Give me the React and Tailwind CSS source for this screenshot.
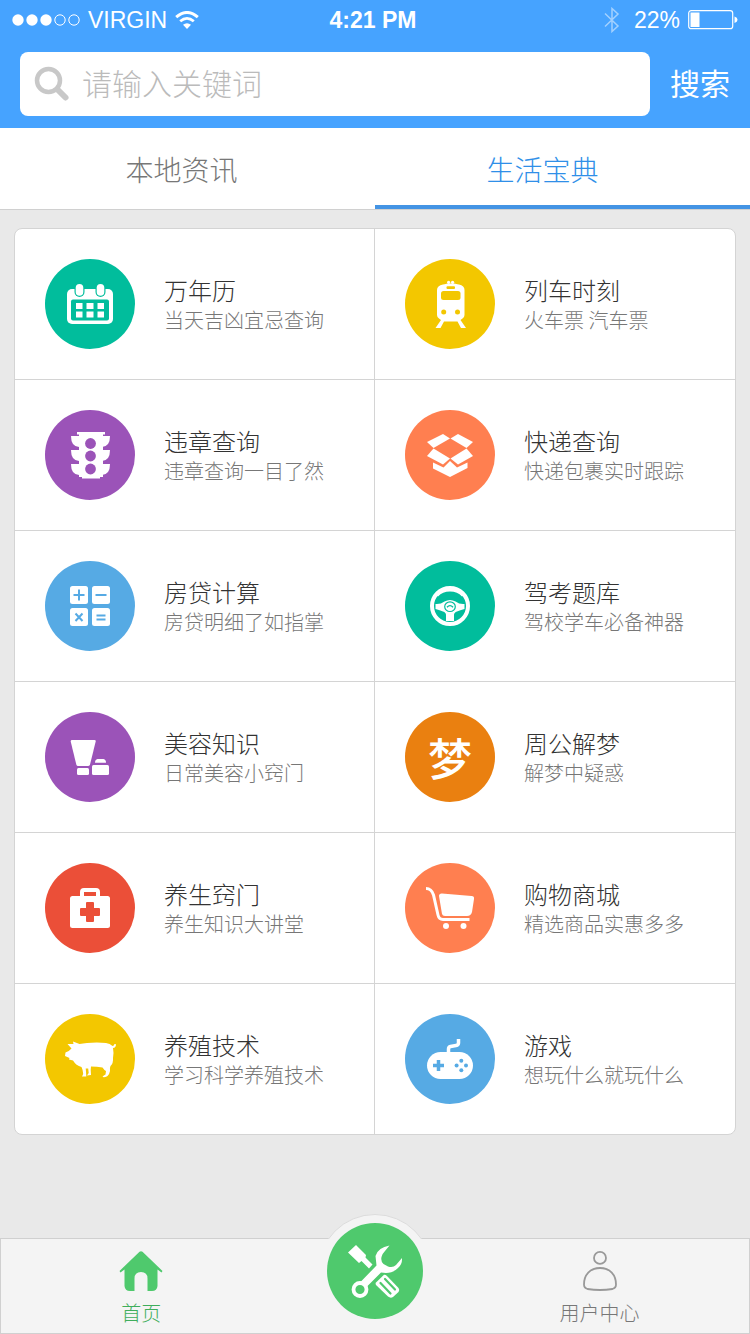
// App.jsx

import React from 'react';

// Service icons, all drawn on the 90x90 badge
const CalendarIcon = ({ color }) => (
  <g fill="#fff">
    <rect x="22" y="30" width="46" height="35" rx="5" />
    <rect x="26" y="40.5" width="38" height="21" rx="2" fill={color} />
    <rect x="29.5" y="22" width="10" height="16" rx="5" fill={color} />
    <rect x="50.5" y="22" width="10" height="16" rx="5" fill={color} />
    <rect x="30.7" y="25" width="7.6" height="11.8" rx="3.8" />
    <rect x="51.7" y="25" width="7.6" height="11.8" rx="3.8" />
    {[44, 52.5].map((y) => (
      <g key={y}>
        <rect x="31" y={y} width="6.5" height="6" />
        <rect x="41.5" y={y} width="7" height="6" />
        <rect x="52.5" y={y} width="6.5" height="6" />
      </g>
    ))}
  </g>
);

const TrainIcon = ({ color }) => (
  <g fill="#fff">
    <circle cx="43.6" cy="23.3" r="1.6" />
    <circle cx="47.6" cy="23.3" r="1.6" />
    <path d="M38 25.5 C42 24 50 24 54 25.5 Q59.5 26.5 59.5 31 V56 Q59.5 58 57.5 59.5 L55.5 61 L61 69 H56 L52.5 62.5 H39 L35.5 69 H30.5 L36 61 L34 59.5 Q32 58 32 56 V31 Q32 26.5 38 25.5 Z" />
    <rect x="41.5" y="27.3" width="8.5" height="2.7" rx="1" fill={color} />
    <rect x="36" y="32" width="19.5" height="9" rx="2.5" fill={color} />
    <circle cx="38.7" cy="53" r="2.5" fill={color} />
    <circle cx="52.5" cy="53" r="2.5" fill={color} />
  </g>
);

const TrafficIcon = ({ color }) => (
  <g fill="#fff">
    <path d="M32 22 H60 V24.5 H58 V67 H55 V68.5 H37 V67 H34 V24.5 H32 Z" />
    {[26, 40, 54].map((y) => (
      <path
        key={y}
        d={`M26 ${y} H65 Q65 ${y + 10.5} 57 ${y + 11} H34 Q26 ${y + 10.5} 26 ${y} Z`}
      />
    ))}
    <circle cx="45.5" cy="33.5" r="5.4" fill={color} />
    <circle cx="45.5" cy="46" r="5.4" fill={color} />
    <circle cx="45.5" cy="59" r="5.4" fill={color} />
  </g>
);

const BoxIcon = () => (
  <g fill="#fff">
    <path d="M22 32 L38 24 L45 28.5 L28.5 38 Z" />
    <path d="M68 32 L53 24 L45.5 28.5 L61.5 38 Z" />
    <path d="M28.5 38.5 L45 48.5 L38 54.5 L22 46 Z" />
    <path d="M61.5 38.5 L45.5 48.5 L53 54.5 L68 46 Z" />
    <path d="M28 52.5 L38.5 57.5 L45 51 L52 57.5 L62.5 52.5 V58 L45 67 L28 58.5 Z" />
  </g>
);

const CalcIcon = ({ color }) => (
  <g>
    <g fill="#fff">
      <rect x="25" y="25" width="18" height="18" rx="2.5" />
      <rect x="47" y="25" width="18" height="18" rx="2.5" />
      <rect x="25" y="47" width="18" height="18" rx="2.5" />
      <rect x="47" y="47" width="18" height="18" rx="2.5" />
    </g>
    <path
      d="M28.5 34 H39.5 M34 28.5 V39.5 M50.5 34 H61.5 M30.5 52.5 L37.5 60 M37.5 52.5 L30.5 60 M51.5 54.5 H60.5 M51.5 58.5 H60.5"
      stroke={color}
      strokeWidth="2"
      fill="none"
    />
  </g>
);

const WheelIcon = ({ color }) => (
  <g fill="#fff">
    <circle cx="45" cy="45" r="18" fill="none" stroke="#fff" strokeWidth="4" />
    <path d="M30 33 Q35.5 26 45 26 Q54.5 26 60 33 L57 35.5 Q52.5 30.5 45 30.5 Q37.5 30.5 33 35.5 Z" />
    <path d="M30.5 43 Q35.5 43.5 39.5 40.5 Q45 37.5 50.5 40.5 Q54.5 43.5 59.5 43 V48 Q55 49 52 50.5 Q49 51.5 49 54 V60 H41 V54 Q41 51.5 38 50.5 Q35 49 30.5 48 Z" />
    <ellipse cx="45" cy="45.7" rx="5.3" ry="4.8" fill="none" stroke={color} strokeWidth="1.2" />
    <path d="M42 46.3 Q45 43 48 46.3" fill="none" stroke={color} strokeWidth="1.4" />
  </g>
);

const BeautyIcon = () => (
  <g fill="#fff">
    <path d="M27 28 H49.5 Q51 28 50.7 29.5 L45 52.5 Q44.5 54 43 54 H33 Q31.7 54 31.3 52.5 L25.7 29.5 Q25.5 28 27 28 Z" />
    <rect x="32" y="56" width="12" height="7" rx="1.5" />
    <path d="M52.5 47 H58.5 Q61 47.5 61 50.8 H50 Q50 47.5 52.5 47 Z" />
    <rect x="47" y="53" width="17" height="10" rx="1.5" />
  </g>
);

const MedkitIcon = ({ color }) => (
  <g fill="#fff">
    <rect x="25" y="33" width="40" height="32" rx="2.5" />
    <path d="M37 34 V29 Q37 27 39 27 H51 Q53 27 53 29 V34" fill="none" stroke="#fff" strokeWidth="4" />
    <path
      d="M42 39 H48 Q49 39 49 40 V45 H54 Q55 45 55 46 V52 Q55 53 54 53 H49 V58 Q49 59 48 59 H42 Q41 59 41 58 V53 H36 Q35 53 35 52 V46 Q35 45 36 45 H41 V40 Q41 39 42 39 Z"
      fill={color}
    />
  </g>
);

const CartIcon = () => (
  <g fill="#fff">
    <path d="M21 25.5 Q26.5 25.5 28.5 32 L33 52 Q34 56.5 38 56.5 H64.5" fill="none" stroke="#fff" strokeWidth="3" />
    <path d="M37 30.5 L66.5 33 Q69.5 33.2 69 36 L67 49 Q66 53 62 53 H40 Q37.5 53 37 51 L34 33 Q34 30.3 37 30.5 Z" />
    <circle cx="41" cy="63" r="3" />
    <circle cx="58.5" cy="63" r="3" />
  </g>
);

const PigIcon = () => (
  <g fill="#fff">
    <path d="M22.5 30 L28.5 30 L28 27.5 L34.5 30 Q38 29.5 42 29 Q52 28 61 29 Q65 29.5 67.5 32 Q69 32 69.5 30 L71 30.3 Q71 34 68 34 Q69 39 68 44 Q68.5 49 65.5 52 Q64.5 54 65 57 Q64.5 60 62.5 62 Q61 63.5 57.5 63 Q58 61.5 60.5 60.5 L61 57 Q59 56 57.5 53.5 Q52 52.5 46 52.5 L45.7 56 L46 61 L42 61.5 L43.7 59 L43.2 54.5 L40.7 54.5 Q41 57 41.3 62.5 L37 62.5 L38.2 60 Q38 56 36.5 53 Q31 51.5 28 46.5 L24 45.5 L24.5 44 L20 42 L20.5 38.5 Q24 37.5 26.5 34.5 Z" />
  </g>
);

const GameIcon = ({ color }) => (
  <g>
    <rect x="22" y="38" width="46" height="27" rx="13.5" fill="#fff" />
    <path d="M43.5 38.5 V35 Q43.5 33 45.5 32.5 L51 31.5 Q53.5 31 53.5 29 V25" fill="none" stroke="#fff" strokeWidth="3.5" />
    <path d="M28 51.5 H39 M33.5 46 V57" stroke={color} strokeWidth="3.5" />
    <g fill={color}>
      <circle cx="56.3" cy="46.7" r="2" />
      <circle cx="61" cy="51.5" r="2" />
      <circle cx="56.3" cy="56.3" r="2" />
      <circle cx="51.6" cy="51.5" r="2" />
    </g>
  </g>
);

const services = [
  { title: '万年历', desc: '当天吉凶宜忌查询', color: '#01bd9c', icon: CalendarIcon },
  { title: '列车时刻', desc: '火车票 汽车票', color: '#f3c700', icon: TrainIcon },
  { title: '违章查询', desc: '违章查询一目了然', color: '#9b53b8', icon: TrafficIcon },
  { title: '快递查询', desc: '快递包裹实时跟踪', color: '#ff7f50', icon: BoxIcon },
  { title: '房贷计算', desc: '房贷明细了如指掌', color: '#56aae4', icon: CalcIcon },
  { title: '驾考题库', desc: '驾校学车必备神器', color: '#01bd9c', icon: WheelIcon },
  { title: '美容知识', desc: '日常美容小窍门', color: '#9b53b8', icon: BeautyIcon },
  { title: '周公解梦', desc: '解梦中疑惑', color: '#ea8010', glyph: '梦' },
  { title: '养生窍门', desc: '养生知识大讲堂', color: '#eb4f38', icon: MedkitIcon },
  { title: '购物商城', desc: '精选商品实惠多多', color: '#ff7f50', icon: CartIcon },
  { title: '养殖技术', desc: '学习科学养殖技术', color: '#f3c700', icon: PigIcon },
  { title: '游戏', desc: '想玩什么就玩什么', color: '#56aae4', icon: GameIcon },
];

// Round colored badge
const Badge = ({ color, icon: Icon, glyph }) => (
  <span
    className="flex size-[90px] shrink-0 items-center justify-center rounded-full text-[44px] leading-none font-medium text-white"
    style={{ backgroundColor: color }}
  >
    {Icon ? (
      <svg viewBox="0 0 90 90" className="size-full" aria-hidden="true">
        <Icon color={color} />
      </svg>
    ) : (
      glyph
    )}
  </span>
);

const ServiceCell = ({ title, desc, color, icon, glyph }) => (
  <li className="border-b border-[#d4d4d4] odd:border-r nth-last-[-n+2]:border-b-0">
    <a href="#" className="flex h-[150px] items-center gap-[29px] pl-[30px]">
      <Badge color={color} icon={icon} glyph={glyph} />
      <span className="flex flex-col pt-0.5">
        <span className="text-[24px] leading-[30px] text-[#333]">{title}</span>
        <span className="text-[20px] leading-[30px] text-[#777]">{desc}</span>
      </span>
    </a>
  </li>
);

const StatusBar = () => (
  <div className="grid h-10 grid-cols-[1fr_auto_1fr] items-center px-3 font-['Liberation_Sans',sans-serif] text-[23px] leading-none font-normal text-white">
    <div className="flex items-center gap-2">
      <svg width="68" height="12" viewBox="0 0 68 12" aria-hidden="true">
        {[6, 20, 34].map((x) => (
          <circle key={x} cx={x} cy="6" r="5.7" fill="#fff" />
        ))}
        {[48, 62].map((x) => (
          <circle key={x} cx={x} cy="6" r="5.2" fill="none" stroke="#fff" />
        ))}
      </svg>
      <span>VIRGIN</span>
      <svg width="24" height="18" viewBox="0 0 24 18" fill="none" stroke="#fff" aria-hidden="true">
        <path d="M1.2 6.2 Q12 -3.2 22.8 6.2" strokeWidth="3" />
        <path d="M5.2 10.3 Q12 4.5 18.8 10.3" strokeWidth="2.8" />
        <path d="M8 13.8 Q12 10.5 16 13.8 L12 18 Z" fill="#fff" stroke="none" />
      </svg>
    </div>
    <span className="pr-1 font-bold">4:21 PM</span>
    <div className="flex items-center justify-end gap-2">
      <svg width="16" height="26" viewBox="0 0 16 26" fill="none" stroke="#fff" strokeWidth="1.5" className="opacity-50" aria-hidden="true">
        <path d="M1 6.5 L14 19 L8 24.5 V1.5 L14 7 L1 19.5" />
      </svg>
      <span className="pl-1.5">22%</span>
      <svg width="50" height="20" viewBox="0 0 50 20" aria-hidden="true">
        <rect x="0.7" y="0.7" width="44" height="18" rx="2.5" fill="none" stroke="#fff" strokeWidth="1.2" />
        <rect x="2.5" y="2.5" width="9" height="14.5" fill="#fff" />
        <path d="M46.5 6.5 Q49.5 7.5 49.5 9.7 Q49.5 12 46.5 13 Z" fill="#fff" />
      </svg>
    </div>
  </div>
);

const SearchBar = () => (
  <form className="flex items-center px-5 py-3" onSubmit={(e) => e.preventDefault()}>
    <label className="flex h-16 flex-1 items-center gap-3 rounded-lg bg-white pl-[14px]">
      <svg width="36" height="36" viewBox="0 0 36 36" fill="none" stroke="#c8c8c8" className="shrink-0" aria-hidden="true">
        <circle cx="14.5" cy="14.5" r="11.5" strokeWidth="4.5" />
        <path d="M23.5 23.5 L31.5 31.5" strokeWidth="6" strokeLinecap="round" />
      </svg>
      <input
        type="text"
        aria-label="搜索关键词"
        placeholder="请输入关键词"
        className="h-full min-w-0 flex-1 bg-transparent pb-1 text-[30px] font-light text-[#444] outline-none placeholder:text-[#bbb]"
      />
    </label>
    <button type="submit" className="pb-1 pl-5 text-[30px] leading-10 font-normal text-white">
      搜索
    </button>
  </form>
);

const Tabs = () => (
  <nav className="grid h-[82px] grid-cols-2 border-b border-[#d0d0d0] bg-white text-[28px]">
    <a href="#" className="flex items-center justify-center border-b-4 border-transparent pt-1 pr-3 text-[#777]">
      本地资讯
    </a>
    <a href="#" aria-current="page" className="flex items-center justify-center border-b-4 border-[#4494e4] pt-1 pr-10 text-[#2f8fe8]">
      生活宝典
    </a>
  </nav>
);

const BottomBar = () => (
  <nav className="relative mt-auto flex h-24 justify-between border border-[#d0d0d0] bg-[#f4f4f4] text-[20px]">
    <a href="#" className="flex w-3/8 flex-col items-center gap-2 pt-3 leading-7 text-[#3fae5c]">
      <svg width="44" height="40" viewBox="0 0 44 40" fill="#4fc96d" className="shrink-0" aria-hidden="true">
        <path d="M20.5 0.8 Q22 -0.5 23.5 0.8 L43.5 20 L42.5 21.5 L38.5 18.5 V35 Q38 40 33 40 H28.5 V27.5 Q28.5 21 22 21 Q15.5 21 15.5 27.5 V40 H11 Q6 40 5.5 35 V18.5 L1.5 21.5 L0.5 20 Z" />
      </svg>
      首页
    </a>
    <a href="#" className="flex w-2/5 flex-col items-center gap-2 pt-3 leading-7 text-[#777]">
      <svg width="36" height="40" viewBox="0 0 36 40" fill="none" stroke="#999" strokeWidth="1.8" className="shrink-0" aria-hidden="true">
        <circle cx="19" cy="6.9" r="6" />
        <path d="M19 17 C29 17 35 24 35 33.5 Q35 37 31.5 38 Q19 40 6.5 38 Q3 37 3 33.5 C3 24 9 17 19 17 Z" />
      </svg>
      用户中心
    </a>

    {/* bump of the bar behind the round button */}
    <span className="absolute bottom-[94px] left-1/2 h-[25px] w-[114px] -translate-x-1/2 overflow-hidden">
      <span className="block size-[114px] rounded-full border border-[#dcdcdc] bg-[#f4f4f4]" />
    </span>
    <button type="button" aria-label="工具" className="absolute -top-4 left-1/2 size-24 -translate-x-1/2 rounded-full bg-[#4fc96d]">
      <svg viewBox="0 0 96 96" className="size-full" fill="#fff" aria-hidden="true">
        <path d="M21 29.5 L29 22 L39 32 L38.5 34.5 L45.5 41.5 L42 45.5 L34.5 38 L32 40 Z" />
        <path d="M62.5 22.5 Q51 24.5 48.5 33 L49.5 42.5 L33 59.5 L39 64.5 L54 49.5 Q65 51.5 71 45 Q75.5 41 75 35 L69 42 Q66 45 61 43.5 L56.5 41 Q53.5 38 54.5 34 Q55 31 58 28 Z" />
        <circle cx="33" cy="66.5" r="6.5" fill="none" stroke="#fff" strokeWidth="3.8" />
        <path d="M49 59.5 L57 51.8 Q58.5 51.5 60 53 L71.5 65 Q73 67 71.5 69 L66 74 Q63.5 75.5 61 73.5 L49 62 Q48 60.8 49 59.5 Z" />
        <path d="M53.5 60 L63.5 70.5 M58 56 L68 66.5" stroke="#4fc96d" strokeWidth="2.2" strokeLinecap="round" />
      </svg>
    </button>
  </nav>
);

export default function App() {
  return (
    <div className="flex min-h-screen flex-col bg-[#e9e9e9] font-['Noto_Sans_CJK_SC',sans-serif] font-light">
      <header className="bg-[#46a3ff]">
        <StatusBar />
        <SearchBar />
      </header>
      <Tabs />
      <main className="px-[14px] pt-[18px] pb-24">
        <ul className="grid grid-cols-2 rounded-lg border border-[#d4d4d4] bg-white">
          {services.map((service) => (
            <ServiceCell key={service.title} {...service} />
          ))}
        </ul>
      </main>
      <BottomBar />
    </div>
  );
}
